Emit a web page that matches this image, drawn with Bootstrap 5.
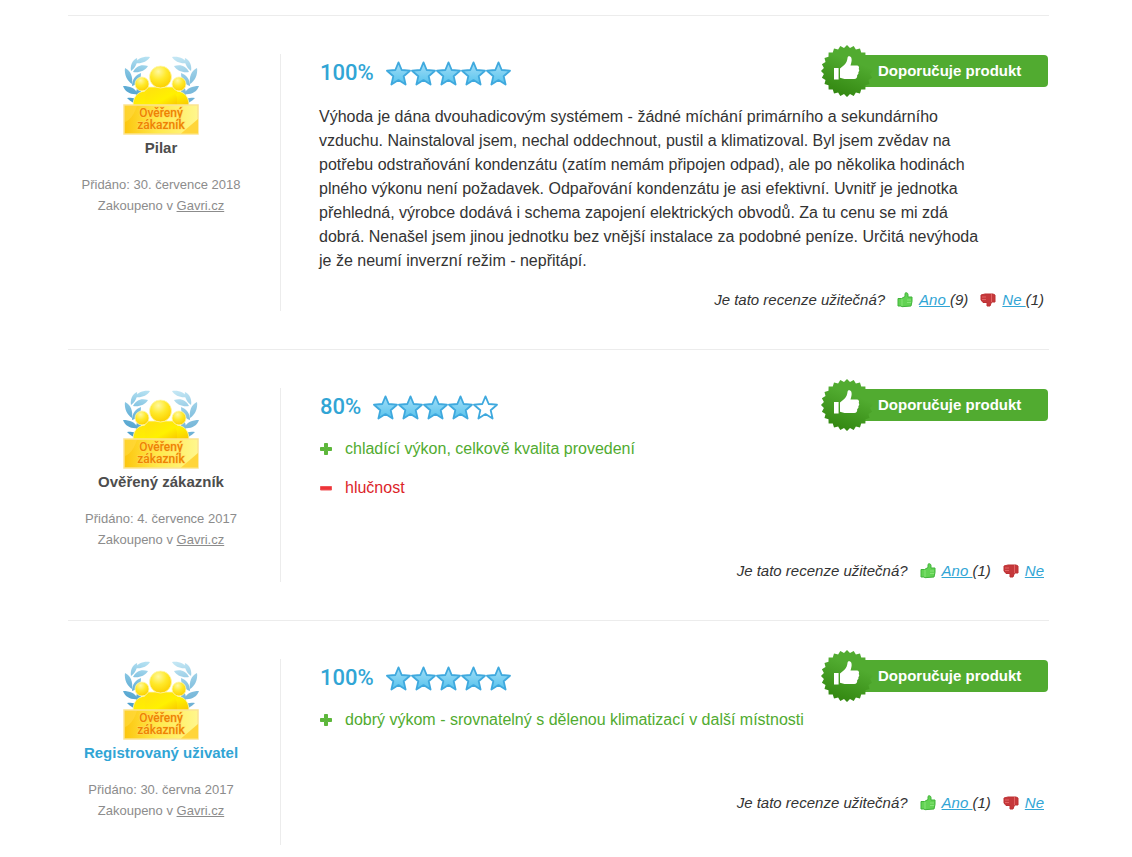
<!DOCTYPE html>
<html lang="cs">
<head>
<meta charset="utf-8">
<meta name="viewport" content="width=device-width, initial-scale=1">
<title>Recenze</title>
<link href="https://cdn.jsdelivr.net/npm/bootstrap@5.3.0/dist/css/bootstrap.min.css" rel="stylesheet">
<style>
body{font-family:"Liberation Sans",Arial,sans-serif;font-size:16px;line-height:24px;color:#333;background:#fff}
.reviews{padding:15px 83px 0 68px}
.review{border-top:1px solid #ececec;padding:38px 0}
.author{width:213px;padding-right:26px;border-right:1px solid #ececec;font-size:13px;line-height:21px;color:#8c8c8c}
.author a{color:inherit}
.author .who{font-size:15px;line-height:20px;font-weight:700;color:#4d4d4d;margin:2px 0 16px}
.author .who a{color:#31a5d5;text-decoration:none}
.detail{padding-left:38px}
.head{height:38px}
.rate{font:500 22px/38px Roboto,"Liberation Sans",sans-serif;color:#31a5d5;padding-left:1px}
.stars{margin-left:12px}
.body-text{max-width:672px;margin-top:13px}
.points{margin-top:11px}
.points li{height:24px;margin-bottom:15px;gap:12px;color:#51ab30}
.points li.con{color:#dc1f2a}
.points svg{width:14px;height:14px}
.recommend{width:200px;height:32px;border-radius:4px;background:#51ab30;color:#fff;font-size:15px;font-weight:700;line-height:32px;margin:1px 1px 0 0;padding-left:30px}
.recommend svg{position:absolute;left:-28px;top:-11px}
.useful{font-size:15px;line-height:22px;font-style:italic;padding-right:5px}
.useful svg{width:16px;height:16px;margin:0 6px 0 12px}
.useful a{color:#31a5d5}
.last-review .detail{padding-bottom:31px}
.points + .useful{margin-top:60px}
.badge-text{font:500 12px Roboto,sans-serif;fill:#ee8300;stroke:#ffd75a;stroke-width:1;paint-order:stroke}
</style>
</head>
<body>
<svg class="position-absolute" width="0" height="0" aria-hidden="true">
<defs>
<linearGradient id="gStar" x1="0" y1="0" x2="0" y2="1"><stop offset="0" stop-color="#a4def7"/><stop offset="1" stop-color="#56c3ed"/></linearGradient>
<linearGradient id="gSeal" gradientUnits="userSpaceOnUse" x1="40" y1="2" x2="20" y2="54"><stop offset=".3" stop-color="#51ab30"/><stop offset="1" stop-color="#31850f"/></linearGradient>
<linearGradient id="gBox" x1="0" y1="0" x2="1" y2="0"><stop offset="0" stop-color="#fcc50d"/><stop offset=".45" stop-color="#ffe94a"/><stop offset="1" stop-color="#fff78e"/></linearGradient>
<radialGradient id="gHead" cx=".4" cy=".25" r=".75"><stop offset="0" stop-color="#fff8a0"/><stop offset=".5" stop-color="#ffe92a"/><stop offset="1" stop-color="#fcd000"/></radialGradient>
<linearGradient id="gBody" x1="0" y1="0" x2="1" y2="1"><stop offset="0" stop-color="#ffdf10"/><stop offset=".6" stop-color="#fff100"/><stop offset="1" stop-color="#f9c600"/></linearGradient>
<linearGradient id="gLeaf" gradientUnits="userSpaceOnUse" x1="0" y1="50" x2="14" y2="0"><stop offset="0" stop-color="#3f96c7"/><stop offset=".5" stop-color="#6db6da"/><stop offset="1" stop-color="#b5e1f2"/></linearGradient>
</defs>
<symbol id="star" viewBox="0 0 25 25"><path d="M12.500 1.400 15.700 9 24 9.700 17.700 15.200 19.600 23.500 12.500 19.100 5.400 23.500 7.300 15.200 1 9.700 9.300 9Z" fill="url(#gStar)" stroke="#3fa9de" stroke-width="1.800" stroke-linejoin="round"/></symbol>
<symbol id="star0" viewBox="0 0 25 25"><path d="M12.500 1.400 15.700 9 24 9.700 17.700 15.200 19.600 23.500 12.500 19.100 5.400 23.500 7.300 15.200 1 9.700 9.300 9Z" fill="#fff" stroke="#3fa9de" stroke-width="1.800" stroke-linejoin="round"/></symbol>
<symbol id="seal" viewBox="0 0 54 54"><path transform="translate(27 27)" d="M26 0 23.100 3 25.100 6.700 21.500 8.900 22.500 13 18.500 14.200 18.400 18.400 14.200 18.500 13 22.500 8.900 21.500 6.700 25.100 3 23.100 0 26-3 23.100-6.700 25.100-8.900 21.500-13 22.500-14.200 18.500-18.400 18.400-18.500 14.200-22.500 13-21.500 8.900-25.100 6.700-23.100 3-26 0-23.100-3-25.100-6.700-21.500-8.900-22.500-13-18.500-14.200-18.400-18.400-14.200-18.500-13-22.500-8.900-21.500-6.700-25.100-3-23.100 0-26 3-23.100 6.700-25.100 8.900-21.500 13-22.500 14.200-18.500 18.400-18.400 18.500-14.200 22.500-13 21.500-8.900 25.100-6.700 23.100-3Z" fill="url(#gSealC)"/><path d="M14 24h4.600v11.500H14ZM20 24.500l4.200-3.500c2.500-2.500 3-4.500 3.400-7.500.3-1.800 3.200-1.400 3.800.5.700 2.500-.2 5-.9 7.500h6.500c1.800 0 2.600 2 1.700 3.400.8 1 .7 2.400-.4 3.100.5 1.300 0 2.600-1.100 3 .2 2.500-.8 4-3 4H24.500L20 33.800Z" fill="#fff"/></symbol>
<linearGradient id="gSealC" href="#gSeal" gradientTransform="translate(-27 -27)"/>
<symbol id="laurel" viewBox="0 0 28 52"><g fill="url(#gLeaf)"><path d="M27 2C20 1 14 4 12 8 18 9 24 7 27 2Z"/><path d="M25 11C18 9 13 11 10 17 16 18 22 16 25 11Z"/><path d="M2 13C1 19 4 26 9 29 10 22 8 16 2 13Z"/><path d="M14 3C9 5 7 11 8 16 12 13 15 8 14 3Z"/><path d="M18 18C12 20 9 25 9 31 15 29 18 25 18 18Z"/><path d="M0 31C2 37 8 40 15 39 12 33 7 31 0 31Z"/><path d="M17 31C13 33 12 38 14 43 18 41 19 36 17 31Z"/><path d="M4 43C8 47 13 50 20 49 16 44 11 42 4 43Z"/></g></symbol>
<symbol id="verified" viewBox="0 0 80 82"><use href="#laurel" x="2" y="1" width="28" height="52"/><use href="#laurel" width="28" height="52" transform="translate(78 1) scale(-1 1)" opacity=".8"/><g stroke="#fff6b0" stroke-width=".8"><path d="M12 52c0-9 4-14 12-15l-1-4h34l-1 4c8 1 12 6 12 15Z" fill="url(#gBody)"/><circle cx="21" cy="30" r="7" fill="url(#gHead)"/><circle cx="58" cy="30" r="7" fill="url(#gHead)"/><path d="M24 52V44c1-7 6-9 12-10h8c6 1 11 4 12 10v8Z" fill="url(#gBody)" stroke="none"/><circle cx="39.500" cy="23" r="11" fill="url(#gHead)"/></g><rect x="3" y="51" width="74" height="29" fill="url(#gBox)" stroke="#fbe391" stroke-width="1.500"/><path d="M60 79.500 77 65v14.500Z" fill="#ffd53a"/><path d="M4 68C10 66 14 58 16 52H4Z" fill="#ffd83a" opacity=".7"/></symbol>
<symbol id="up" viewBox="0 0 16 16"><path d="M1 6.500h3.500L8 4.500V1.500C8 .5 11 .3 11 2.500V5h4v4.500L14 14l-9 .7L4 14H1Z" fill="#62d253" stroke="#41b33a"/><path d="M5 7v7M10 8h4M10 10.500h4" stroke="#91e882" stroke-width=".8"/></symbol>
<symbol id="down" viewBox="0 0 16 16"><path d="M1 3l4-1h8l2 1v7h-3.500L10 14H7v-3.500H3L1 8Z" fill="#c5383b" stroke="#bd3033"/><path d="M11.500 2v8M2 5h4M2 7.500h4" stroke="#e56767" stroke-width=".9"/></symbol>
<symbol id="plus" viewBox="0 0 14 14"><path d="M5.500 1.500h3v4h4v3h-4v4h-3v-4h-4v-3h4Z" fill="#5db73b" stroke="#5db73b" stroke-linejoin="round"/></symbol>
<symbol id="minus" viewBox="0 0 14 14"><path d="M1.500 5.500h11v3.500h-11Z" fill="#ee3338" stroke="#f0575a" stroke-linejoin="round"/></symbol>
</svg>

<main class="container-fluid reviews">
<article class="review d-flex">
  <aside class="author flex-shrink-0 text-center">
    <svg class="d-block mx-auto" width="80" height="82" role="img" aria-label="Ověřený zákazník"><use href="#verified"/><text class="badge-text" x="40" y="63" text-anchor="middle">Ověřený</text><text class="badge-text" x="40" y="75" text-anchor="middle">zákazník</text></svg>
    <div class="who">Pilar</div>
    <div>Přidáno: 30. července 2018</div>
    <div>Zakoupeno v <a href="#">Gavri.cz</a></div>
  </aside>
  <section class="detail flex-grow-1">
    <div class="head d-flex justify-content-between">
      <div class="d-flex align-items-center"><span class="rate">100%</span><span class="stars d-flex"><svg width="25" height="25"><use href="#star"/></svg><svg width="25" height="25"><use href="#star"/></svg><svg width="25" height="25"><use href="#star"/></svg><svg width="25" height="25"><use href="#star"/></svg><svg width="25" height="25"><use href="#star"/></svg></span></div>
      <div class="recommend position-relative"><svg width="54" height="54"><use href="#seal"/></svg>Doporučuje produkt</div>
    </div>
    <p class="body-text mb-3">Výhoda je dána dvouhadicovým systémem - žádné míchání primárního a sekundárního vzduchu. Nainstaloval jsem, nechal oddechnout, pustil a klimatizoval. Byl jsem zvědav na potřebu odstraňování kondenzátu (zatím nemám připojen odpad), ale po několika hodinách plného výkonu není požadavek. Odpařování kondenzátu je asi efektivní. Uvnitř je jednotka přehledná, výrobce dodává i schema zapojení elektrických obvodů. Za tu cenu se mi zdá dobrá. Nenašel jsem jinou jednotku bez vnější instalace za podobné peníze. Určitá nevýhoda je že neumí inverzní režim - nepřitápí.</p>
    <div class="useful d-flex justify-content-end align-items-center"><span>Je tato recenze užitečná?</span><svg><use href="#up"/></svg><span><a href="#">Ano </a>(9)</span><svg><use href="#down"/></svg><span><a href="#">Ne </a>(1)</span></div>
  </section>
</article>

<article class="review d-flex">
  <aside class="author flex-shrink-0 text-center">
    <svg class="d-block mx-auto" width="80" height="82" role="img" aria-label="Ověřený zákazník"><use href="#verified"/><text class="badge-text" x="40" y="63" text-anchor="middle">Ověřený</text><text class="badge-text" x="40" y="75" text-anchor="middle">zákazník</text></svg>
    <div class="who">Ověřený zákazník</div>
    <div>Přidáno: 4. července 2017</div>
    <div>Zakoupeno v <a href="#">Gavri.cz</a></div>
  </aside>
  <section class="detail flex-grow-1">
    <div class="head d-flex justify-content-between">
      <div class="d-flex align-items-center"><span class="rate">80%</span><span class="stars d-flex"><svg width="25" height="25"><use href="#star"/></svg><svg width="25" height="25"><use href="#star"/></svg><svg width="25" height="25"><use href="#star"/></svg><svg width="25" height="25"><use href="#star"/></svg><svg width="25" height="25"><use href="#star0"/></svg></span></div>
      <div class="recommend position-relative"><svg width="54" height="54"><use href="#seal"/></svg>Doporučuje produkt</div>
    </div>
    <ul class="points list-unstyled mb-0">
      <li class="d-flex align-items-center"><svg><use href="#plus"/></svg>chladící výkon, celkově kvalita provedení</li>
      <li class="con d-flex align-items-center"><svg><use href="#minus"/></svg>hlučnost</li>
    </ul>
    <div class="useful d-flex justify-content-end align-items-center"><span>Je tato recenze užitečná?</span><svg><use href="#up"/></svg><span><a href="#">Ano </a>(1)</span><svg><use href="#down"/></svg><a href="#">Ne</a></div>
  </section>
</article>

<article class="review last-review d-flex pb-0">
  <aside class="author flex-shrink-0 text-center">
    <svg class="d-block mx-auto" width="80" height="82" role="img" aria-label="Ověřený zákazník"><use href="#verified"/><text class="badge-text" x="40" y="63" text-anchor="middle">Ověřený</text><text class="badge-text" x="40" y="75" text-anchor="middle">zákazník</text></svg>
    <div class="who"><a href="#">Registrovaný uživatel</a></div>
    <div>Přidáno: 30. června 2017</div>
    <div>Zakoupeno v <a href="#">Gavri.cz</a></div>
  </aside>
  <section class="detail flex-grow-1">
    <div class="head d-flex justify-content-between">
      <div class="d-flex align-items-center"><span class="rate">100%</span><span class="stars d-flex"><svg width="25" height="25"><use href="#star"/></svg><svg width="25" height="25"><use href="#star"/></svg><svg width="25" height="25"><use href="#star"/></svg><svg width="25" height="25"><use href="#star"/></svg><svg width="25" height="25"><use href="#star"/></svg></span></div>
      <div class="recommend position-relative"><svg width="54" height="54"><use href="#seal"/></svg>Doporučuje produkt</div>
    </div>
    <ul class="points list-unstyled mb-0">
      <li class="d-flex align-items-center"><svg><use href="#plus"/></svg>dobrý výkom - srovnatelný s dělenou klimatizací v další místnosti</li>
    </ul>
    <div class="useful d-flex justify-content-end align-items-center"><span>Je tato recenze užitečná?</span><svg><use href="#up"/></svg><span><a href="#">Ano </a>(1)</span><svg><use href="#down"/></svg><a href="#">Ne</a></div>
  </section>
</article>
</main>
<script src="https://cdn.jsdelivr.net/npm/bootstrap@5.3.0/dist/js/bootstrap.bundle.min.js"></script>
</body>
</html>
